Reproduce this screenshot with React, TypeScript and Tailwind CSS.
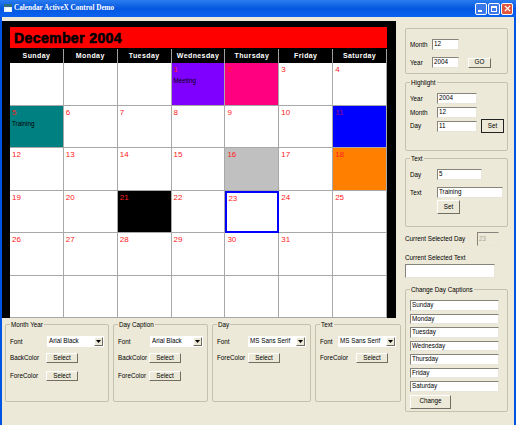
import { ReactNode } from 'react';

const days = ['Sunday', 'Monday', 'Tuesday', 'Wednesday', 'Thursday', 'Friday', 'Saturday'];

type Cell = { day?: number; bg?: string; note?: string; selected?: boolean };

const cells: Cell[] = [
  {},
  {},
  {},
  { day: 1, bg: 'bg-[#8000ff]', note: 'Meeting' },
  { day: 2, bg: 'bg-[#ff0080]' },
  { day: 3 },
  { day: 4 },
  { day: 5, bg: 'bg-[#008080]', note: 'Training' },
  { day: 6 },
  { day: 7 },
  { day: 8 },
  { day: 9 },
  { day: 10 },
  { day: 11, bg: 'bg-[#0000ff]' },
  { day: 12 },
  { day: 13 },
  { day: 14 },
  { day: 15 },
  { day: 16, bg: 'bg-[#c0c0c0]' },
  { day: 17 },
  { day: 18, bg: 'bg-[#ff8000]' },
  { day: 19 },
  { day: 20 },
  { day: 21, bg: 'bg-black' },
  { day: 22 },
  { day: 23, selected: true },
  { day: 24 },
  { day: 25 },
  { day: 26 },
  { day: 27 },
  { day: 28 },
  { day: 29 },
  { day: 30 },
  { day: 31 },
  {},
  {},
  {},
  {},
  {},
  {},
  {},
  {},
];

function GroupBox({ title, className, children }: { title?: string; className: string; children: ReactNode }) {
  return (
    <div className={`relative rounded-[2px] border border-[#c4c1ae] ${className}`}>
      {title && (
        <span className="absolute -top-[5px] left-[4px] whitespace-nowrap bg-[#ece9d8] px-[1px] text-[6.3px] leading-[9px]">
          {title}
        </span>
      )}
      {children}
    </div>
  );
}

function TextBox({ value, className, disabled }: { value?: string; className: string; disabled?: boolean }) {
  return (
    <div
      className={`flex items-center border border-b-[#e8e6da] border-l-[#85837a] border-r-[#e8e6da] border-t-[#85837a] pl-[1px] text-[6.3px] leading-none ${
        disabled ? 'bg-[#ece9d8] text-[#a9a793]' : 'bg-white'
      } ${className}`}
    >
      {value}
    </div>
  );
}

function Button({ label, className }: { label: string; className: string }) {
  return (
    <div
      className={`flex items-center justify-center border border-b-[#716f64] border-l-white border-r-[#716f64] border-t-white bg-[#ece9d8] text-[6.3px] leading-none ${className}`}
    >
      {label}
    </div>
  );
}

function Dropdown({ value, className }: { value: string; className: string }) {
  return (
    <div className={`flex h-[11px] items-center justify-between bg-white pl-[2px] pr-[1px] text-[6.3px] leading-none ${className}`}>
      <span className="whitespace-nowrap">{value}</span>
      <div className="flex h-[9px] w-[9px] items-center justify-center border border-b-[#716f64] border-l-white border-r-[#716f64] border-t-white bg-[#ece9d8]">
        <svg width="5" height="3" viewBox="0 0 5 3">
          <path d="M0 0h5L2.5 3z" fill="#000" />
        </svg>
      </div>
    </div>
  );
}

function Calendar() {
  return (
    <div className="mt-[4px] h-[297px] w-[394px] bg-black pl-[8px] pt-[6px]">
      <div className="h-[21px] w-[377px] bg-[#ff0000] pl-[4px] text-[14px] font-bold leading-[22px] tracking-[0.4px] [-webkit-text-stroke:0.6px_black]">
        December 2004
      </div>
      <div className="grid w-[377px] grid-cols-7 pt-[1px]">
        {days.map((d) => (
          <div
            key={d}
            className="flex h-[14px] items-center justify-center border-r border-[#a0a0a0] text-[7px] font-bold tracking-[0.4px] text-white"
          >
            {d}
          </div>
        ))}
      </div>
      <div className="grid w-[377px] grid-cols-7 grid-rows-[repeat(6,42.5px)] bg-white">
        {cells.map((c, i) => (
          <div
            key={i}
            className={`text-[8px] leading-[12px] ${c.bg ?? 'bg-white'} ${
              c.selected ? 'border-2 border-[#0000ff] pl-[1px]' : 'border-b border-r border-[#a8a8a8] pl-[2px] pt-[1px]'
            }`}
          >
            {c.day && <div className={c.bg === 'bg-[#0000ff]' ? 'text-[#a00080]' : 'text-[#ff2020]'}>{c.day}</div>}
            {c.note && <div className="text-[6.3px] leading-[10px] text-black">{c.note}</div>}
          </div>
        ))}
      </div>
    </div>
  );
}

function StyleGroup({
  title,
  font,
  back,
  className,
  fontLabel,
  colorLabel,
  selectClass,
}: {
  title: string;
  font: string;
  back?: boolean;
  className: string;
  fontLabel: string;
  colorLabel: string;
  selectClass: string;
}) {
  return (
    <GroupBox title={title} className={`h-[78px] shrink-0 pl-[4px] pt-[11px] ${className}`}>
      <div className="flex items-center">
        <span className={`text-[6.3px] ${fontLabel}`}>Font</span>
        <Dropdown value={font} className={selectClass} />
      </div>
      {back && (
        <div className="mt-[6px] flex items-center">
          <span className={`text-[6.3px] ${colorLabel}`}>BackColor</span>
          <Button label="Select" className="h-[10px] w-[32px]" />
        </div>
      )}
      <div className={`flex items-center ${back ? 'mt-[8px]' : 'mt-[6px]'}`}>
        <span className={`text-[6.3px] ${colorLabel}`}>ForeColor</span>
        <Button label="Select" className="h-[10px] w-[32px]" />
      </div>
    </GroupBox>
  );
}

function RightPanel() {
  return (
    <div className="ml-[4px] w-[103px] pt-[11px]">
      <GroupBox className="h-[46px] pl-[4px] pt-[10px]">
        <div className="flex items-center">
          <span className="w-[22px] text-[6.3px]">Month</span>
          <TextBox value="12" className="h-[11px] w-[27px]" />
        </div>
        <div className="mt-[7px] flex items-center">
          <span className="w-[22px] text-[6.3px]">Year</span>
          <TextBox value="2004" className="h-[11px] w-[27px]" />
          <Button label="GO" className="ml-[9px] h-[10px] w-[23px]" />
        </div>
      </GroupBox>

      <GroupBox title="Highlight" className="mt-[8px] h-[69px] pl-[4px] pt-[10px]">
        <div className="flex items-center">
          <span className="w-[27px] text-[6.3px]">Year</span>
          <TextBox value="2004" className="h-[11px] w-[40px]" />
        </div>
        <div className="mt-[3px] flex items-center">
          <span className="w-[27px] text-[6.3px]">Month</span>
          <TextBox value="12" className="h-[11px] w-[40px]" />
        </div>
        <div className="mt-[1px] flex items-center">
          <span className="w-[27px] text-[6.3px]">Day</span>
          <TextBox value="11" className="h-[11px] w-[40px]" />
          <Button label="Set" className="ml-[4px] h-[14px] w-[23px] outline outline-1 -outline-offset-1 outline-[#222]" />
        </div>
      </GroupBox>

      <GroupBox title="Text" className="mt-[7px] h-[69px] pl-[4px] pt-[10px]">
        <div className="flex items-center">
          <span className="w-[27px] text-[6.3px]">Day</span>
          <TextBox value="5" className="h-[11px] w-[45px]" />
        </div>
        <div className="mt-[7px] flex items-center">
          <span className="w-[27px] text-[6.3px]">Text</span>
          <TextBox value="Training" className="h-[11px] w-[66px]" />
        </div>
        <Button label="Set" className="ml-[27px] mt-[2px] h-[14px] w-[23px]" />
      </GroupBox>

      <div className="mt-[5px] flex items-center">
        <span className="w-[72px] whitespace-nowrap text-[6.3px]">Current Selected Day</span>
        <TextBox value="23" disabled className="h-[14px] w-[22px]" />
      </div>
      <div className="mt-[6px] text-[6.3px] leading-[12px]">Current Selected Text</div>
      <TextBox className="h-[14px] w-[90px]" />

      <GroupBox title="Change Day Captions" className="mt-[11px] h-[123px] pl-[4px] pt-[10px]">
        <div className="flex flex-col gap-[3px]">
          {days.map((d) => (
            <TextBox key={d} value={d} className="h-[10.5px] w-[89px]" />
          ))}
        </div>
        <Button label="Change" className="mt-[3px] h-[14px] w-[41px]" />
      </GroupBox>
    </div>
  );
}

export default function App() {
  return (
    <div className="h-[425px] w-[516px] overflow-hidden bg-[#0054e3] font-['Liberation_Sans',sans-serif] text-black">
      <div className="flex h-[17px] items-center justify-between bg-gradient-to-b from-[#2a7cf0] via-[#0458e0] to-[#0a62f0] pl-[3px] pr-[3px]">
        <div className="flex items-center gap-[1px]">
          <svg width="10" height="10" viewBox="0 0 10 10">
            <rect x="1" y="1" width="8" height="8" fill="#e8f0f8" />
            <rect x="1" y="1" width="8" height="3" fill="#2f6f7f" />
            <rect x="3" y="5" width="5" height="3" fill="#ffffff" />
          </svg>
          <span className="font-['Liberation_Serif',serif] text-[7.2px] font-bold tracking-[0px] text-white">
            Calendar ActiveX Control Demo
          </span>
        </div>
        <div className="flex gap-[1px]">
          <div className="flex h-[12px] w-[12px] items-end rounded-[2px] border border-white bg-[#3c78e8] p-[2px]">
            <div className="h-[2px] w-[4px] bg-white" />
          </div>
          <div className="h-[12px] w-[12px] rounded-[2px] border border-white bg-[#3c78e8] p-[2px]">
            <div className="h-full w-full border border-t-2 border-white" />
          </div>
          <div className="flex h-[12px] w-[12px] items-center justify-center rounded-[2px] border border-white bg-[#e0563a]">
            <svg width="7" height="7" viewBox="0 0 8 8">
              <path d="M1 1l6 6M7 1L1 7" stroke="#fff" strokeWidth="1.5" />
            </svg>
          </div>
        </div>
      </div>
      <div className="ml-[2px] flex h-[408px] w-[512px] bg-[#ece9d8]">
        <div className="w-[399px] shrink-0">
          <Calendar />
          <div className="ml-[3px] mt-[6px] flex">
            <StyleGroup
              title="Month Year"
              font="Arial Black"
              back
              className="w-[104px]"
              fontLabel="w-[37px]"
              colorLabel="w-[36px]"
              selectClass="w-[57px]"
            />
            <StyleGroup
              title="Day Caption"
              font="Arial Black"
              back
              className="ml-[4px] w-[95px]"
              fontLabel="w-[32px]"
              colorLabel="w-[31px]"
              selectClass="w-[53px]"
            />
            <StyleGroup
              title="Day"
              font="MS Sans Serif"
              className="ml-[4px] w-[99px]"
              fontLabel="w-[31px]"
              colorLabel="w-[31px]"
              selectClass="w-[58px]"
            />
            <StyleGroup
              title="Text"
              font="MS Sans Serif"
              className="ml-[4px] w-[86px]"
              fontLabel="w-[18px]"
              colorLabel="w-[36px]"
              selectClass="w-[58px]"
            />
          </div>
        </div>
        <RightPanel />
      </div>
    </div>
  );
}
